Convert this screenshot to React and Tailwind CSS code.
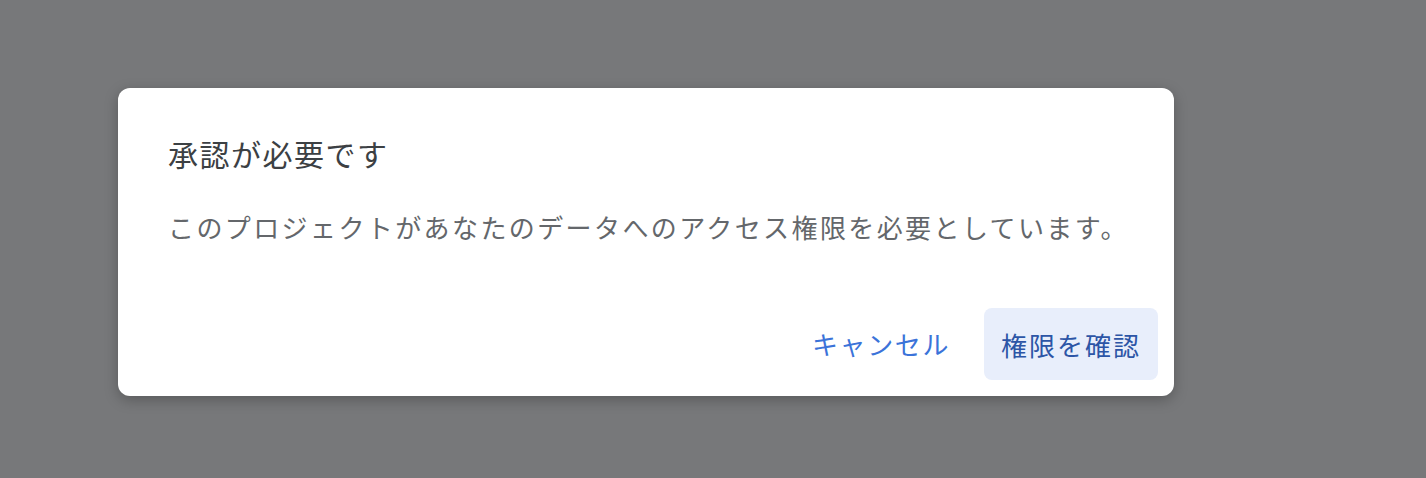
export default function App() {
  return (
    <div
      className="w-full h-[478px] bg-[#77787a] pt-[88px] pl-[118px]"
      style={{ fontFamily: '"Noto Sans CJK JP", "Noto Sans", sans-serif' }}
    >
      {/* ── Dialog card ───────────────────────────────────── */}
      <div className="w-[1056px] h-[308px] bg-white rounded-[12px] shadow-[0_4px_14px_rgba(0,0,0,0.25)] flex flex-col">
        <h2 className="pl-[50px] pt-[45px] text-[30px] leading-[40px] tracking-[1.5px] text-[#3c4043] font-normal">
          承認が必要です
        </h2>
        <p className="pl-[50px] mt-[36px] text-[26px] leading-[36px] tracking-[2.4px] text-[#64676b] font-normal">
          このプロジェクトがあなたのデータへのアクセス権限を必要としています。
        </p>

        {/* ── Actions ─────────────────────────────────────── */}
        <div className="mt-auto flex justify-end items-center gap-[34px] pr-4 pb-4">
          <button className="text-[26px] tracking-[1.6px] text-[#3b73d9] leading-[72px] font-normal">
            キャンセル
          </button>
          <button className="h-[72px] w-[174px] rounded-[8px] bg-[#e8eefb] text-[26px] tracking-[2px] text-[#2c55a6]">
            権限を確認
          </button>
        </div>
      </div>
    </div>
  )
}
